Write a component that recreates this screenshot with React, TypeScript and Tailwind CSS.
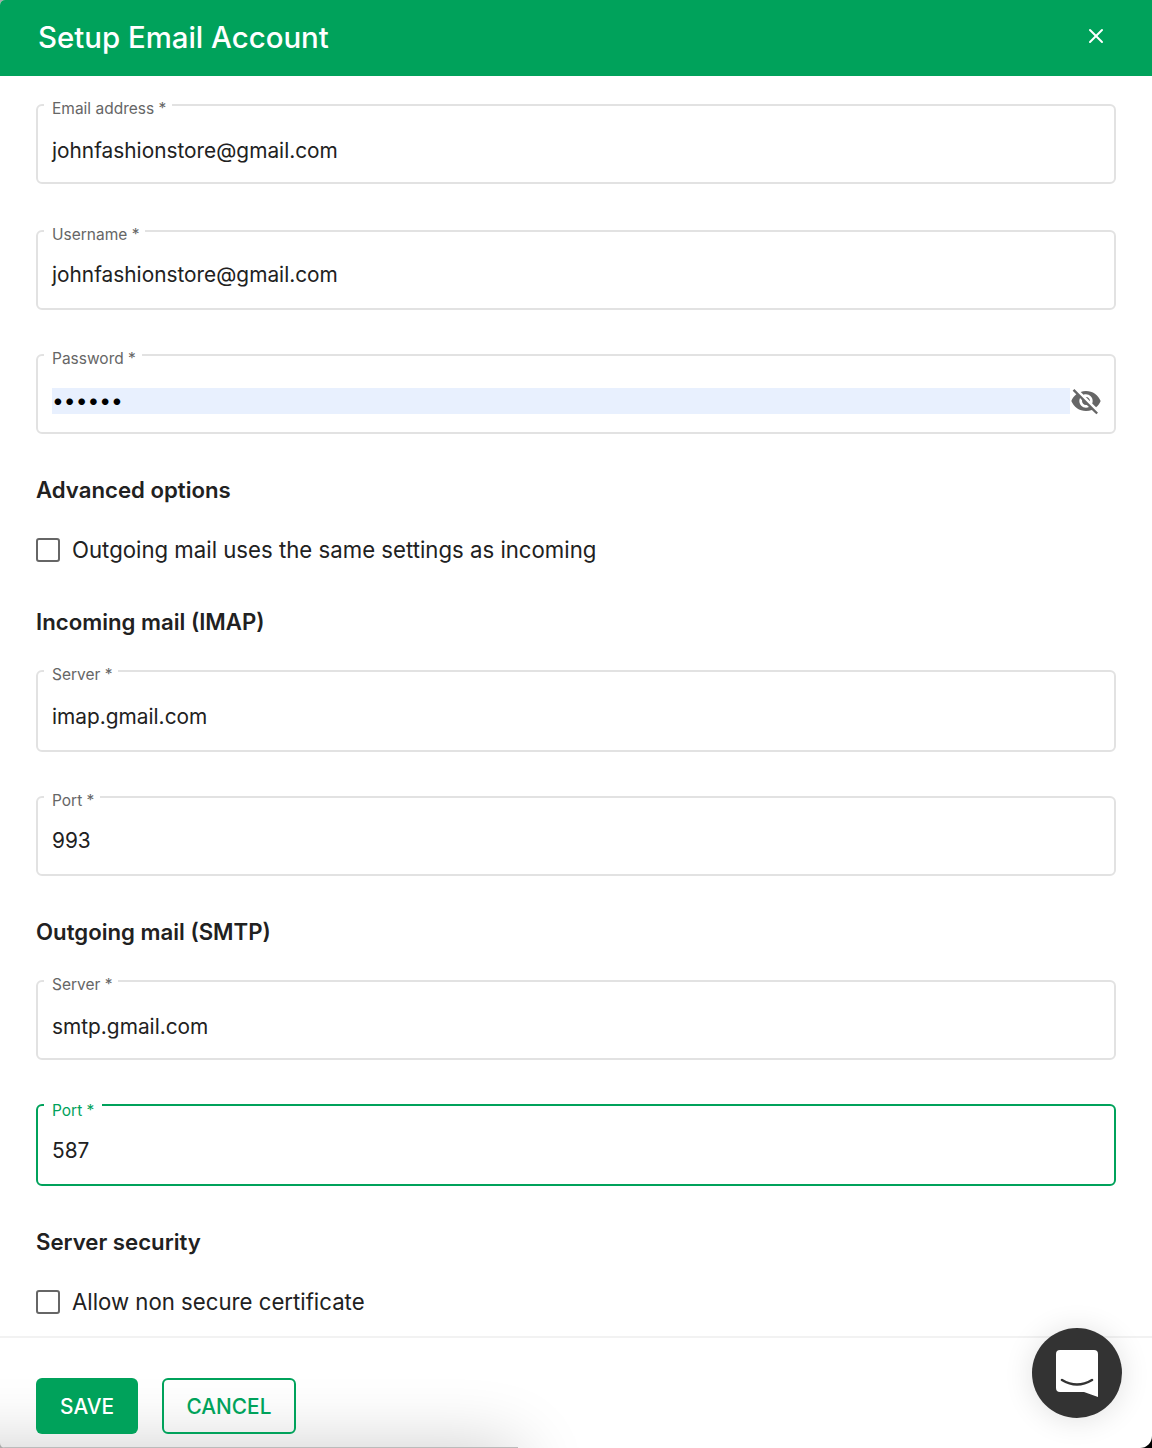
import React from 'react';
import { X } from 'lucide-react';

const FONT = "font-['Inter','Liberation_Sans',sans-serif]";

interface FieldProps {
  label: string;
  value: string;
  focused?: boolean;
  tight?: boolean;
  className?: string;
}

const FieldLabel: React.FC<{ label: string; focused?: boolean }> = ({ label, focused }) => (
  <span
    className={`absolute left-[6px] bg-white pl-2 text-[15.5px] leading-[18px] ${
      focused ? '-top-[4px] pr-2 text-[#00a25b]' : '-top-[6px] pr-1.5 text-[#666666]'
    }`}
  >
    {label}
  </span>
);

const Field: React.FC<FieldProps> = ({ label, value, focused, tight, className }) => (
  <div
    className={`relative rounded-md border-2 px-3.5 ${tight ? 'pt-[30px]' : 'pt-[32px]'} ${
      focused ? 'border-[#00a25b]' : 'border-[#e2e2e2]'
    } ${className ?? 'h-20'}`}
  >
    <FieldLabel label={label} focused={focused} />
    <div className="text-[20.85px] leading-[26px] text-[#212121]">{value}</div>
  </div>
);

const PasswordField = () => (
  <div className="relative mt-11 h-20 rounded-md border-2 border-[#e2e2e2] pl-3.5 pr-3 pt-[29px]">
    <FieldLabel label="Password *" />
    <div className="flex items-center">
      <div className="h-[26px] flex-1 bg-[#e8f0fe] text-[21px] leading-[26px] text-black">••••••</div>
      <svg viewBox="0 0 24 24" className="h-8 w-8 fill-[#666666]">
        <path d="M12 7c2.76 0 5 2.24 5 5 0 .65-.13 1.26-.36 1.83l2.92 2.92c1.51-1.26 2.7-2.89 3.43-4.75-1.73-4.39-6-7.5-11-7.5-1.4 0-2.74.25-3.98.7l2.16 2.16C10.74 7.13 11.35 7 12 7zM2 4.27l2.28 2.28.46.46C3.08 8.3 1.78 10.02 1 12c1.73 4.39 6 7.5 11 7.5 1.55 0 3.03-.3 4.38-.84l.42.42L19.73 22 21 20.73 3.27 3 2 4.27zM7.53 9.8l1.55 1.55c-.05.21-.08.43-.08.65 0 1.66 1.34 3 3 3 .22 0 .44-.03.65-.08l1.55 1.55c-.67.33-1.41.53-2.2.53-2.76 0-5-2.24-5-5 0-.79.2-1.53.53-2.2zm4.31-.78l3.15 3.15.02-.16c0-1.66-1.34-3-3-3l-.17.01z" />
      </svg>
    </div>
  </div>
);

const Check: React.FC<{ label: string; className?: string }> = ({ label, className }) => (
  <div className={`flex items-center gap-3 ${className ?? ''}`}>
    <div className="h-6 w-6 rounded-[3px] border-2 border-[#666666]" />
    <span className="text-[22.2px] leading-7 text-[#212121]">{label}</span>
  </div>
);

const Heading: React.FC<{ children: React.ReactNode; className?: string }> = ({ children, className }) => (
  <h2 className={`text-[22.2px] font-semibold leading-7 text-[#212121] ${className ?? ''}`}>{children}</h2>
);

export default function App() {
  return (
    <div className={`relative h-[1448px] overflow-hidden bg-[linear-gradient(to_right,#aaaaaa_50%,#000000_50%)] ${FONT}`}>
      <div className="relative flex h-full flex-col overflow-hidden rounded-tl-[5px] rounded-bl-[5px] rounded-br-[12px] bg-white">
        {/* Header */}
        <header className="flex h-[76px] shrink-0 items-center justify-between bg-[#00a25b] pl-[38px] pr-[44px]">
          <h1 className="text-[29.4px] font-medium leading-9 text-white">Setup Email Account</h1>
          <X className="mb-1 h-6 w-6 text-white" strokeWidth={2} />
        </header>

        {/* Form */}
        <div className="flex-1 px-9 pt-7">
          <Field label="Email address *" value="johnfashionstore@gmail.com" />
          <Field label="Username *" value="johnfashionstore@gmail.com" tight className="mt-[46px] h-20" />
          <PasswordField />

          <Heading className="mt-[42px]">Advanced options</Heading>
          <Check label="Outgoing mail uses the same settings as incoming" className="mt-[32px]" />

          <Heading className="mt-[44px]">Incoming mail (IMAP)</Heading>
          <Field label="Server *" value="imap.gmail.com" className="mt-[34px] h-[82px]" />
          <Field label="Port *" value="993" tight className="mt-11 h-20" />

          <Heading className="mt-[42px]">Outgoing mail (SMTP)</Heading>
          <Field label="Server *" value="smtp.gmail.com" className="mt-[34px] h-20" />
          <Field label="Port *" value="587" focused className="mt-11 h-[82px]" />

          <Heading className="mt-[42px]">Server security</Heading>
          <Check label="Allow non secure certificate" className="mt-[32px]" />
        </div>

        {/* Footer */}
        <footer className="flex h-[112px] shrink-0 border-t-2 border-[#f2f2f2] px-9 pt-10">
          <div className="relative z-10 flex gap-6">
            <button className="h-14 w-[102px] rounded-md bg-[#00a25b] pt-0.5 text-[20.8px] font-medium text-white">SAVE</button>
            <button className="h-14 w-[134px] rounded-md border-2 border-[#00a25b] pt-0.5 text-[20.8px] font-medium text-[#00a25b]">
              CANCEL
            </button>
          </div>
        </footer>

        {/* Shadow of the element just below the fold */}
        <div className="absolute -left-[100px] top-[1447px] h-24 w-[618px] bg-[#bbbbbb] shadow-[0_0_70px_rgba(0,0,0,0.2)]" />

        {/* Chat launcher */}
        <div className="absolute left-[1032px] top-[1328px] flex h-[90px] w-[90px] items-center justify-center rounded-full bg-[#333333] shadow-[0_2px_30px_rgba(0,0,0,0.12)]">
          <svg viewBox="0 0 42 47" className="h-[47px] w-[42px]">
            <path d="M4 0h34a4 4 0 0 1 4 4v43l-14-5H4a4 4 0 0 1-4-4V4a4 4 0 0 1 4-4z" fill="#ffffff" />
            <path d="M6 30Q21 39 36 30" fill="none" stroke="#333333" strokeWidth="2.6" strokeLinecap="round" />
          </svg>
        </div>
      </div>
    </div>
  );
}
